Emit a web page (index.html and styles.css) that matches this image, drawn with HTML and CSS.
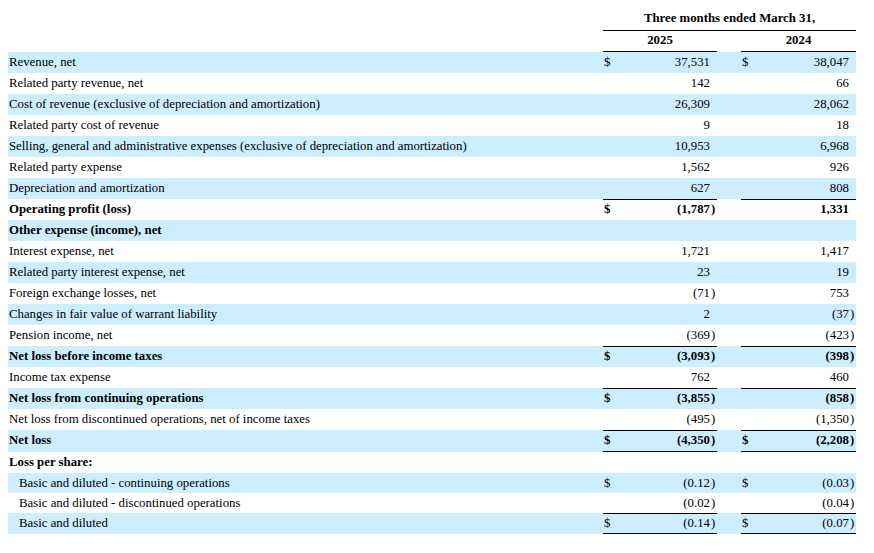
FILE: index.html
```html
<!DOCTYPE html>
<html lang="en">
<head>
<meta charset="utf-8">
<title>Statement of Operations</title>
<link rel="stylesheet" href="styles.css">
</head>
<body>
<div class="sheet">
  <div class="row head1">
    <div class="lab"></div>
    <div class="span3">Three months ended March 31,</div>
  </div>
  <div class="row head2">
    <div class="lab"></div>
    <div class="amt hdr">2025</div>
    <div class="gap"></div>
    <div class="amt hdr">2024</div>
  </div>

  <div class="row shade">
    <div class="lab">Revenue, net</div>
    <div class="amt"><span class="cur">$</span><span class="num">37,531</span><span class="par"></span></div>
    <div class="gap"></div>
    <div class="amt"><span class="cur">$</span><span class="num">38,047</span><span class="par"></span></div>
  </div>
  <div class="row">
    <div class="lab">Related party revenue, net</div>
    <div class="amt"><span class="cur"></span><span class="num">142</span><span class="par"></span></div>
    <div class="gap"></div>
    <div class="amt"><span class="cur"></span><span class="num">66</span><span class="par"></span></div>
  </div>
  <div class="row shade">
    <div class="lab">Cost of revenue (exclusive of depreciation and amortization)</div>
    <div class="amt"><span class="cur"></span><span class="num">26,309</span><span class="par"></span></div>
    <div class="gap"></div>
    <div class="amt"><span class="cur"></span><span class="num">28,062</span><span class="par"></span></div>
  </div>
  <div class="row">
    <div class="lab">Related party cost of revenue</div>
    <div class="amt"><span class="cur"></span><span class="num">9</span><span class="par"></span></div>
    <div class="gap"></div>
    <div class="amt"><span class="cur"></span><span class="num">18</span><span class="par"></span></div>
  </div>
  <div class="row shade">
    <div class="lab">Selling, general and administrative expenses (exclusive of depreciation and amortization)</div>
    <div class="amt"><span class="cur"></span><span class="num">10,953</span><span class="par"></span></div>
    <div class="gap"></div>
    <div class="amt"><span class="cur"></span><span class="num">6,968</span><span class="par"></span></div>
  </div>
  <div class="row">
    <div class="lab">Related party expense</div>
    <div class="amt"><span class="cur"></span><span class="num">1,562</span><span class="par"></span></div>
    <div class="gap"></div>
    <div class="amt"><span class="cur"></span><span class="num">926</span><span class="par"></span></div>
  </div>
  <div class="row shade">
    <div class="lab">Depreciation and amortization</div>
    <div class="amt"><span class="cur"></span><span class="num">627</span><span class="par"></span></div>
    <div class="gap"></div>
    <div class="amt"><span class="cur"></span><span class="num">808</span><span class="par"></span></div>
  </div>
  <div class="row bold">
    <div class="lab">Operating profit (loss)</div>
    <div class="amt rule-top"><span class="cur">$</span><span class="num">(1,787</span><span class="par">)</span></div>
    <div class="gap"></div>
    <div class="amt rule-top"><span class="cur"></span><span class="num">1,331</span><span class="par"></span></div>
  </div>
  <div class="row shade bold">
    <div class="lab">Other expense (income), net</div>
    <div class="amt"></div>
    <div class="gap"></div>
    <div class="amt"></div>
  </div>
  <div class="row">
    <div class="lab">Interest expense, net</div>
    <div class="amt"><span class="cur"></span><span class="num">1,721</span><span class="par"></span></div>
    <div class="gap"></div>
    <div class="amt"><span class="cur"></span><span class="num">1,417</span><span class="par"></span></div>
  </div>
  <div class="row shade">
    <div class="lab">Related party interest expense, net</div>
    <div class="amt"><span class="cur"></span><span class="num">23</span><span class="par"></span></div>
    <div class="gap"></div>
    <div class="amt"><span class="cur"></span><span class="num">19</span><span class="par"></span></div>
  </div>
  <div class="row">
    <div class="lab">Foreign exchange losses, net</div>
    <div class="amt"><span class="cur"></span><span class="num">(71</span><span class="par">)</span></div>
    <div class="gap"></div>
    <div class="amt"><span class="cur"></span><span class="num">753</span><span class="par"></span></div>
  </div>
  <div class="row shade">
    <div class="lab">Changes in fair value of warrant liability</div>
    <div class="amt"><span class="cur"></span><span class="num">2</span><span class="par"></span></div>
    <div class="gap"></div>
    <div class="amt"><span class="cur"></span><span class="num">(37</span><span class="par">)</span></div>
  </div>
  <div class="row">
    <div class="lab">Pension income, net</div>
    <div class="amt"><span class="cur"></span><span class="num">(369</span><span class="par">)</span></div>
    <div class="gap"></div>
    <div class="amt"><span class="cur"></span><span class="num">(423</span><span class="par">)</span></div>
  </div>
  <div class="row shade bold">
    <div class="lab">Net loss before income taxes</div>
    <div class="amt rule-top"><span class="cur">$</span><span class="num">(3,093</span><span class="par">)</span></div>
    <div class="gap"></div>
    <div class="amt rule-top"><span class="cur"></span><span class="num">(398</span><span class="par">)</span></div>
  </div>
  <div class="row">
    <div class="lab">Income tax expense</div>
    <div class="amt"><span class="cur"></span><span class="num">762</span><span class="par"></span></div>
    <div class="gap"></div>
    <div class="amt"><span class="cur"></span><span class="num">460</span><span class="par"></span></div>
  </div>
  <div class="row shade bold">
    <div class="lab">Net loss from continuing operations</div>
    <div class="amt rule-top"><span class="cur">$</span><span class="num">(3,855</span><span class="par">)</span></div>
    <div class="gap"></div>
    <div class="amt rule-top"><span class="cur"></span><span class="num">(858</span><span class="par">)</span></div>
  </div>
  <div class="row">
    <div class="lab">Net loss from discontinued operations, net of income taxes</div>
    <div class="amt"><span class="cur"></span><span class="num">(495</span><span class="par">)</span></div>
    <div class="gap"></div>
    <div class="amt"><span class="cur"></span><span class="num">(1,350</span><span class="par">)</span></div>
  </div>
  <div class="row shade bold tall">
    <div class="lab">Net loss</div>
    <div class="amt rule-both"><span class="cur">$</span><span class="num">(4,350</span><span class="par">)</span></div>
    <div class="gap"></div>
    <div class="amt rule-both"><span class="cur">$</span><span class="num">(2,208</span><span class="par">)</span></div>
  </div>
  <div class="row bold">
    <div class="lab">Loss per share:</div>
    <div class="amt"></div>
    <div class="gap"></div>
    <div class="amt"></div>
  </div>
  <div class="row shade short">
    <div class="lab indent">Basic and diluted - continuing operations</div>
    <div class="amt"><span class="cur">$</span><span class="num">(0.12</span><span class="par">)</span></div>
    <div class="gap"></div>
    <div class="amt"><span class="cur">$</span><span class="num">(0.03</span><span class="par">)</span></div>
  </div>
  <div class="row short">
    <div class="lab indent">Basic and diluted - discontinued operations</div>
    <div class="amt"><span class="cur"></span><span class="num">(0.02</span><span class="par">)</span></div>
    <div class="gap"></div>
    <div class="amt"><span class="cur"></span><span class="num">(0.04</span><span class="par">)</span></div>
  </div>
  <div class="row shade">
    <div class="lab indent">Basic and diluted</div>
    <div class="amt rule-both"><span class="cur">$</span><span class="num">(0.14</span><span class="par">)</span></div>
    <div class="gap"></div>
    <div class="amt rule-both"><span class="cur">$</span><span class="num">(0.07</span><span class="par">)</span></div>
  </div>
</div>
</body>
</html>
```
FILE: styles.css
```css
html, body {
  margin: 0;
  padding: 0;
  background: #ffffff;
}
body {
  padding: 8px 0 0 8px;
  font-family: "Liberation Serif", "Times New Roman", serif;
  font-size: 12.8px;
  color: #000000;
}
.sheet {
  width: 848px;
}
.row {
  display: grid;
  grid-template-columns: 595px 114px 24px 115px;
  height: 21px;
  line-height: 20px;
  white-space: nowrap;
}
.row.tall {
  height: 22px;
  line-height: 21px;
}
.row.short {
  height: 20px;
  line-height: 20px;
}
.shade {
  background: #cceeff;
}
.bold {
  font-weight: bold;
}
.lab {
  padding-left: 1px;
}
.lab.indent {
  padding-left: 11px;
}
.head1 {
  height: 23px;
  line-height: 20px;
  font-weight: bold;
}
.head1 .span3 {
  grid-column: 2 / 5;
  text-align: center;
  box-shadow: inset 0 -1px 0 #000;
}
.head2 {
  height: 21px;
  line-height: 18px;
  font-weight: bold;
}
.hdr {
  text-align: center;
  box-shadow: inset 0 -1px 0 #000;
}
.amt {
  display: flex;
}
.cur {
  width: 14px;
  padding-left: 1px;
  box-sizing: border-box;
}
.num {
  flex: 1;
  text-align: right;
}
.par {
  width: 7px;
  padding-left: 1px;
  box-sizing: border-box;
}
.amt.hdr {
  display: block;
}
.rule-top {
  box-shadow: inset 0 1px 0 #000;
}
.rule-both {
  box-shadow: inset 0 1px 0 #000, inset 0 -1px 0 #000;
}
```
